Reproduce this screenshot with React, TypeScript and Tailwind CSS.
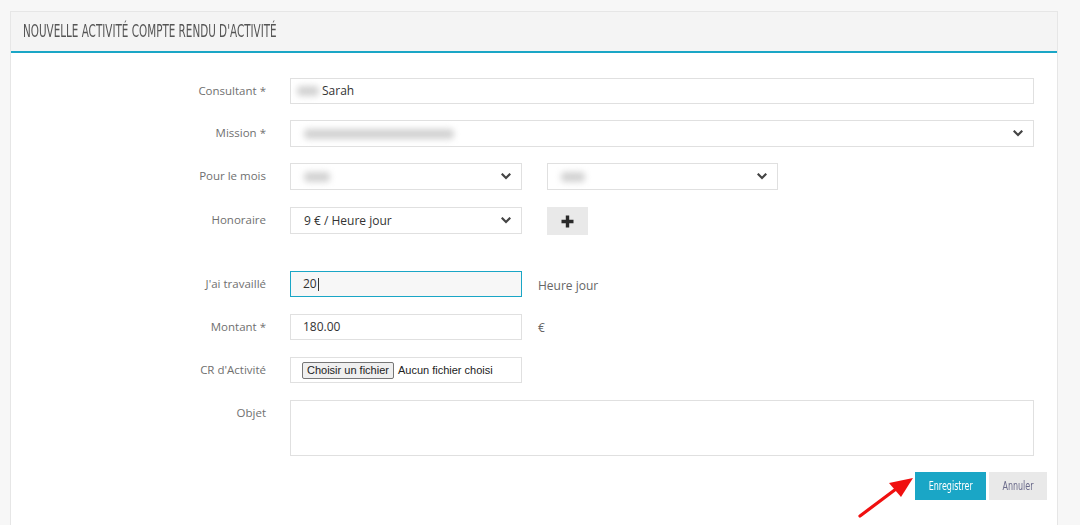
import React from "react";

const sans = "font-['Open_Sans',sans-serif]";
const narrow = "font-['DejaVu_Sans_Condensed','DejaVu_Sans',sans-serif]";

function Chevron() {
  return (
    <svg className="w-[10px] h-[7px] text-[#444]" viewBox="0 0 10 7" fill="none">
      <path d="M1.5 1.5L5 5L8.5 1.5" stroke="currentColor" strokeWidth={2.2} strokeLinecap="square" />
    </svg>
  );
}

function Blur({ w }: { w: number }) {
  return (
    <span
      className="inline-block h-[10px] rounded-sm bg-[#d2d2d2] blur-[3px]"
      style={{ width: w }}
    />
  );
}

function Row({
  label,
  children,
  className = "",
}: {
  label: string;
  children: React.ReactNode;
  className?: string;
}) {
  return (
    <div className={`flex items-start ${className}`}>
      <label className={`w-[255px] shrink-0 pt-[4px] text-right text-[11.5px] text-[#707070] ${sans}`}>
        {label}
      </label>
      <div className="ml-[24px] flex flex-1 items-start">{children}</div>
    </div>
  );
}

function Select({ children, width }: { children: React.ReactNode; width: string }) {
  return (
    <div className={`${width} h-[27px] flex items-center justify-between border border-[#e0e0e0] bg-white pl-[13px] pr-[10px]`}>
      <div className={`flex items-center text-[12px] text-[#333] ${sans}`}>{children}</div>
      <Chevron />
    </div>
  );
}

export default function App() {
  return (
    <div className="relative min-h-[525px] w-[1080px] bg-[#f7f7f7] pt-[11px] pl-[10px]">
      <div className="w-[1048px] min-h-[514px] border border-[#e6e6e6] border-b-0 bg-white">
        <div className="h-[41px] flex items-center bg-[#f4f4f4] border-b-2 border-[#1aa6c6] pl-[12px]">
          <h3 className={`origin-left scale-x-[0.68] whitespace-nowrap text-[17px] font-light text-[#555] ${narrow}`}>
            NOUVELLE ACTIVITÉ COMPTE RENDU D'ACTIVITÉ
          </h3>
        </div>

        <form className="pt-[25px] pr-[23px]">
          <Row label="Consultant *">
            <div className={`w-full h-[26px] flex items-center gap-[3px] border border-[#e0e0e0] pl-[6px] text-[12px] text-[#333] ${sans}`}>
              <Blur w={22} />
              <span>Sarah</span>
            </div>
          </Row>

          <Row label="Mission *" className="mt-[16px]">
            <Select width="w-full">
              <Blur w={150} />
            </Select>
          </Row>

          <Row label="Pour le mois" className="mt-[16px]">
            <Select width="w-[232px]">
              <Blur w={26} />
            </Select>
            <div className="ml-[25px]">
              <Select width="w-[231px]">
                <Blur w={24} />
              </Select>
            </div>
          </Row>

          <Row label="Honoraire" className="mt-[17px]">
            <Select width="w-[232px]">
              <span>9 € / Heure jour</span>
            </Select>
            <button
              type="button"
              className="ml-[25px] w-[41px] h-[28px] flex items-center justify-center bg-[#e9e9e9]"
            >
              <svg className="w-[13px] h-[13px]" viewBox="0 0 13 13">
                <path d="M6.5 0.5V12.5M0.5 6.5H12.5" stroke="#2a2a2a" strokeWidth={3.4} />
              </svg>
            </button>
          </Row>

          <Row label="J'ai travaillé" className="mt-[36px]">
            <div className={`w-[232px] h-[26px] flex items-center border border-[#1aa6c6] bg-[#f7f7f7] pl-[12px] text-[12px] text-[#333] ${sans}`}>
              20<span className="ml-[1px] inline-block w-px h-[13px] bg-[#333]" />
            </div>
            <span className={`ml-[16px] pt-[6px] text-[12px] text-[#666] ${sans}`}>Heure jour</span>
          </Row>

          <Row label="Montant *" className="mt-[17px]">
            <div className={`w-[232px] h-[26px] flex items-center border border-[#e0e0e0] pl-[12px] text-[12px] text-[#333] ${sans}`}>
              180.00
            </div>
            <span className={`ml-[16px] pt-[5px] text-[12px] text-[#666] ${sans}`}>€</span>
          </Row>

          <Row label="CR d'Activité" className="mt-[17px]">
            <div className="w-[232px] h-[26px] flex items-center border border-[#e0e0e0] pl-[11px] font-['Liberation_Sans',Arial,sans-serif] text-[11px] text-[#222]">
              <span className="h-[17px] flex items-center border border-[#767676] rounded-[2px] bg-[#efefef] px-[4px]">
                Choisir un fichier
              </span>
              <span className="ml-[4px]">Aucun fichier choisi</span>
            </div>
          </Row>

          <Row label="Objet" className="mt-[17px]">
            <div className="w-full h-[56px] border border-[#e0e0e0]" />
          </Row>

          <div className="mt-[16px] mr-[-13px] flex justify-end gap-[3px]">
            <button
              type="button"
              className="w-[71px] h-[28px] flex items-center justify-center bg-[#1aa6c6]"
            >
              <span className={`scale-x-[0.74] whitespace-nowrap text-white text-[12px] ${narrow}`}>Enregistrer</span>
            </button>
            <button
              type="button"
              className="w-[58px] h-[28px] flex items-center justify-center bg-[#e9e9e9]"
            >
              <span className={`scale-x-[0.74] whitespace-nowrap text-[#6a6a8a] text-[12px] ${narrow}`}>Annuler</span>
            </button>
          </div>
        </form>
      </div>

      <svg className="absolute left-[855px] top-[472px] w-[62px] h-[50px]" viewBox="0 0 62 50">
        <path d="M5 44L45 14" stroke="#f01010" strokeWidth={3.2} strokeLinecap="round" />
        <path d="M58 6L34 11L46 25Z" fill="#f01010" />
      </svg>
    </div>
  );
}
